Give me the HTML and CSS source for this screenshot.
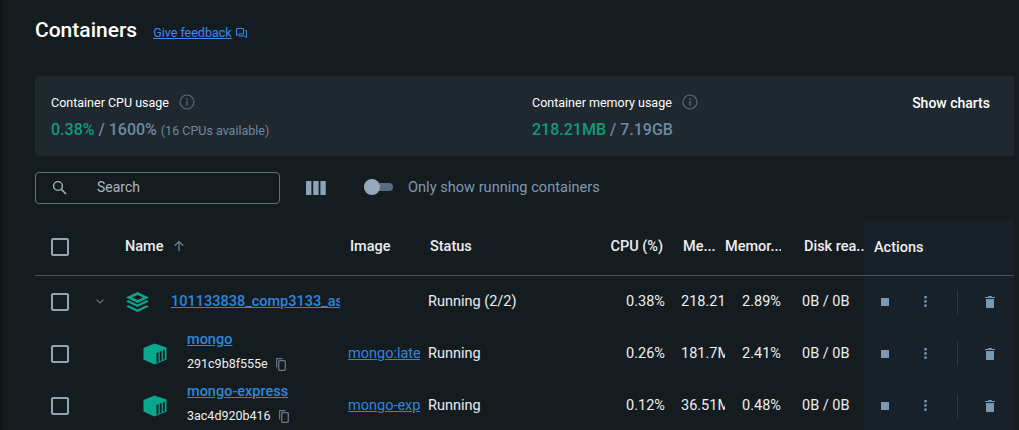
FILE: index.html
```html
<!DOCTYPE html>
<html lang="en">
<head>
    <meta charset="UTF-8">
    <title>Containers</title>
    <link rel="stylesheet" href="styles.css">
</head>
<body>
    <svg class="sprites" width="0" height="0">
        <symbol id="info" viewBox="0 0 16 16">
            <circle cx="8" cy="8" r="7" fill="none" stroke="currentColor" stroke-width="1.2"/>
            <rect x="7.3" y="7" width="1.4" height="4.5" fill="currentColor"/>
            <rect x="7.3" y="4.4" width="1.4" height="1.5" fill="currentColor"/>
        </symbol>
        <symbol id="stack" viewBox="0 0 25 22">
            <path d="M12.5 1 L24 6.5 L12.5 12 L1 6.5 Z M12.5 4 L7 6.5 L12.5 9 L18 6.5 Z" fill="currentColor" fill-rule="evenodd"/>
            <path d="M1 10.5 L3.5 9.3 L12.5 13.6 L21.5 9.3 L24 10.5 L12.5 16 Z" fill="currentColor"/>
            <path d="M1 15.5 L3.5 14.3 L12.5 18.6 L21.5 14.3 L24 15.5 L12.5 21 Z" fill="currentColor"/>
        </symbol>
        <symbol id="box" viewBox="0 0 24 22">
            <path d="M11.5 0.5 L23.5 4.5 V16.5 L11.5 21.5 L0.5 16.5 V5 Z" fill="currentColor"/>
            <path d="M13.5 10 L15.5 9.2 V19 L13.5 19.8 Z M16.8 8.6 L18.6 7.9 V17.6 L16.8 18.4 Z M19.9 7.4 L21.8 6.6 V16 L19.9 16.9 Z" fill="#151c20"/>
        </symbol>
        <symbol id="copy" viewBox="0 0 10 13">
            <path d="M0.6 9.5 V0.6 H6.5" fill="none" stroke="currentColor" stroke-width="1.1"/>
            <rect x="2.7" y="2.7" width="6.6" height="9.6" rx="1" fill="none" stroke="currentColor" stroke-width="1.3"/>
        </symbol>
        <symbol id="stop" viewBox="0 0 8 8">
            <rect width="8" height="8" fill="currentColor"/>
        </symbol>
        <symbol id="dots" viewBox="0 0 3 11">
            <rect width="2.4" height="2.4" x="0.3" fill="currentColor"/>
            <rect width="2.4" height="2.4" x="0.3" y="4.2" fill="currentColor"/>
            <rect width="2.4" height="2.4" x="0.3" y="8.4" fill="currentColor"/>
        </symbol>
        <symbol id="trash" viewBox="0 0 10 12">
            <path d="M0 1 H3 L3.5 0 H6.5 L7 1 H10 V2 H0 Z" fill="currentColor"/>
            <path d="M1 3 H9 V11 Q9 12 8 12 H2 Q1 12 1 11 Z" fill="currentColor"/>
        </symbol>
    </svg>

    <div class="page">
        <header class="title-row">
            <h1>Containers</h1>
            <a class="feedback" href="#">Give feedback</a>
            <svg class="feedback-icon" width="11" height="10" viewBox="0 0 11 10">
                <path d="M0.5 0.5 H7.5 V6 H2.5 L0.5 7.5 Z" fill="none" stroke="currentColor"/>
                <path d="M9 2.5 H10.5 V9.5 L8.5 8 H3 V7" fill="none" stroke="currentColor"/>
            </svg>
        </header>

        <section class="stats">
            <div class="stat stat-cpu">
                <div class="stat-label">Container CPU usage <svg class="info"><use href="#info"/></svg></div>
                <div class="stat-value"><span class="used">0.38%</span> / 1600% <small>(16 CPUs available)</small></div>
            </div>
            <div class="stat stat-mem">
                <div class="stat-label">Container memory usage <svg class="info"><use href="#info"/></svg></div>
                <div class="stat-value"><span class="used">218.21MB</span> / 7.19GB</div>
            </div>
            <button class="charts">Show charts</button>
        </section>

        <div class="toolbar">
            <label class="search">
                <svg width="15" height="15" viewBox="0 0 15 15">
                    <circle cx="6" cy="6" r="4.4" fill="none" stroke="currentColor" stroke-width="1.4"/>
                    <path d="M9.3 9.3 L14 14" stroke="currentColor" stroke-width="1.6"/>
                </svg>
                <span>Search</span>
            </label>
            <svg class="columns" width="20" height="14" viewBox="0 0 20 14">
                <rect width="5.4" height="14" rx="0.6" fill="currentColor"/>
                <rect x="7.2" width="5.4" height="14" rx="0.6" fill="currentColor"/>
                <rect x="14.4" width="5.4" height="14" rx="0.6" fill="currentColor"/>
            </svg>
            <span class="switch"><i></i></span>
            <span class="switch-label">Only show running containers</span>
        </div>

        <div class="table">
            <div class="row head">
                <div class="cell"><span class="check"></span></div>
                <div class="cell"></div>
                <div class="cell name-head">Name
                    <svg width="12" height="12" viewBox="0 0 12 12"><path d="M6 11 V1.5 M1.7 5.7 L6 1.4 L10.3 5.7" fill="none" stroke="currentColor" stroke-width="1.4"/></svg>
                </div>
                <div class="cell image-head">Image</div>
                <div class="cell status-head">Status</div>
                <div class="cell right cpu-head">CPU (%)</div>
                <div class="cell clip mem-head">Me...</div>
                <div class="cell clip pct-head">Memor...</div>
                <div class="cell clip disk-head">Disk rea...</div>
                <div class="cell actions">Actions</div>
            </div>

            <div class="row">
                <div class="cell"><span class="check"></span></div>
                <div class="cell chevron">
                    <svg width="8" height="5" viewBox="0 0 8 5"><path d="M0.6 0.6 L4 4 L7.4 0.6" fill="none" stroke="currentColor" stroke-width="1.2"/></svg>
                </div>
                <div class="cell group-name">
                    <svg class="stack-icon"><use href="#stack"/></svg>
                    <a class="bold-link" href="#">101133838_comp3133_assignment2</a>
                </div>
                <div class="cell"></div>
                <div class="cell">Running (2/2)</div>
                <div class="cell right">0.38%</div>
                <div class="cell clip">218.21MB</div>
                <div class="cell right pct">2.89%</div>
                <div class="cell disk">0B / 0B</div>
                <div class="cell actions row-actions">
                    <svg class="stop"><use href="#stop"/></svg>
                    <svg class="dots"><use href="#dots"/></svg>
                    <span class="divider"></span>
                    <svg class="trash"><use href="#trash"/></svg>
                </div>
            </div>

            <div class="row">
                <div class="cell"><span class="check"></span></div>
                <div class="cell"></div>
                <div class="cell child-name">
                    <svg class="box-icon"><use href="#box"/></svg>
                    <div class="child-text">
                        <a class="bold-link" href="#">mongo</a>
                        <div class="container-id">291c9b8f555e <svg class="copy"><use href="#copy"/></svg></div>
                    </div>
                </div>
                <div class="cell image"><a href="#">mongo:latest</a></div>
                <div class="cell">Running</div>
                <div class="cell right">0.26%</div>
                <div class="cell clip">181.7MB</div>
                <div class="cell right pct">2.41%</div>
                <div class="cell disk">0B / 0B</div>
                <div class="cell actions row-actions">
                    <svg class="stop"><use href="#stop"/></svg>
                    <svg class="dots"><use href="#dots"/></svg>
                    <span class="divider"></span>
                    <svg class="trash"><use href="#trash"/></svg>
                </div>
            </div>

            <div class="row">
                <div class="cell"><span class="check"></span></div>
                <div class="cell"></div>
                <div class="cell child-name">
                    <svg class="box-icon"><use href="#box"/></svg>
                    <div class="child-text">
                        <a class="bold-link" href="#">mongo-express</a>
                        <div class="container-id">3ac4d920b416 <svg class="copy"><use href="#copy"/></svg></div>
                    </div>
                </div>
                <div class="cell image"><a href="#">mongo-express</a></div>
                <div class="cell">Running</div>
                <div class="cell right">0.12%</div>
                <div class="cell clip">36.51MB</div>
                <div class="cell right pct">0.48%</div>
                <div class="cell disk">0B / 0B</div>
                <div class="cell actions row-actions">
                    <svg class="stop"><use href="#stop"/></svg>
                    <svg class="dots"><use href="#dots"/></svg>
                    <span class="divider"></span>
                    <svg class="trash"><use href="#trash"/></svg>
                </div>
            </div>
        </div>
    </div>
</body>
</html>
```

FILE: styles.css
```css
html, body {
    height: 100%;
    overflow: hidden;
}
body {
    margin: 0;
    background: #151c20;
    border-left: 3px solid #0f1417;
    font-family: Roboto, "Liberation Sans", sans-serif;
    font-size: 14.5px;
    color: #eceef0;
}
a {
    color: #2e86de;
}
.sprites {
    position: absolute;
}
.page {
    padding-left: 32px;
    padding-right: 5px;
}
.title-row {
    display: flex;
    align-items: center;
    height: 60px;
    margin-bottom: 16px;
}
h1 {
    margin: 0 16px 0 0;
    font-size: 21px;
    font-weight: 500;
    color: #fff;
}
.feedback {
    font-size: 12.5px;
    margin-top: 5px;
    color: #3a8df0;
}
.feedback-icon {
    margin: 5px 0 0 4px;
    color: #3a8df0;
}
.stats {
    display: flex;
    height: 80px;
    box-sizing: border-box;
    background: #1e282e;
    border-radius: 4px;
    padding: 17px 24px 0 16px;
}
.stat-cpu {
    width: 481px;
}
.stat-label {
    display: flex;
    align-items: center;
    gap: 10px;
    height: 18px;
    font-size: 12.5px;
    color: #fff;
}
.info {
    width: 16px;
    height: 16px;
    color: #5d6a75;
}
.stat-value {
    margin-top: 9px;
    font-size: 16px;
    font-weight: 500;
    color: #6d88a3;
}
.stat-value small {
    font-size: 12.5px;
    font-weight: 400;
}
.used {
    color: #0f9b7a;
}
.charts {
    margin: 1px 0 0 auto;
    padding: 0;
    height: 18px;
    background: none;
    border: none;
    font: 500 14px Roboto, sans-serif;
    color: #fff;
}
.toolbar {
    display: flex;
    align-items: center;
    height: 32px;
    margin: 16px 0;
}
.search {
    display: flex;
    align-items: center;
    box-sizing: border-box;
    width: 245px;
    height: 32px;
    padding: 0 0 2px 16px;
    border: 1px solid #5a7088;
    border-radius: 4px;
    color: #a9b6c3;
}
.search span {
    margin-left: 30px;
    font-size: 14px;
}
.columns {
    margin-left: 26px;
    color: #8ba3b8;
}
.switch {
    position: relative;
    width: 29px;
    height: 8px;
    margin: 0 0 2px 38px;
    border-radius: 4px;
    background: #566d85;
}
.switch i {
    position: absolute;
    left: 0;
    top: -4px;
    width: 16px;
    height: 16px;
    border-radius: 50%;
    background: #96a9bb;
}
.switch-label {
    margin: 0 0 2px 15px;
    font-size: 14.6px;
    color: #7e9ab5;
}
.row {
    display: grid;
    grid-template-columns: 55px 35px 223px 80px 172px 65px 60px 56px 83px 150px;
    height: 52px;
}
.head {
    height: 55px;
    border-bottom: 1px solid #4c5256;
    font-weight: 500;
}
.cell {
    display: flex;
    align-items: center;
    min-width: 0;
    white-space: nowrap;
    padding-bottom: 1px;
    box-sizing: border-box;
}
.head .cell {
    padding-bottom: 3px;
}
.head .actions {
    padding-bottom: 1px;
}
.right {
    justify-content: flex-end;
}
.clip {
    overflow: hidden;
    padding-left: 16px;
}
.image a {
    display: block;
    width: 72px;
    overflow: hidden;
}
.check {
    display: block;
    box-sizing: border-box;
    width: 18px;
    height: 18px;
    margin: 1px 0 0 16px;
    border: 2px solid #8fa5b8;
    border-radius: 2px;
}
.name-head svg {
    margin-left: 9px;
    color: #66788a;
}
.image-head {
    padding-left: 2px;
}
.status-head {
    padding-left: 2px;
}
.cpu-head {
    padding-right: 2px;
}
.mem-head {
    padding-left: 18px;
}
.pct-head {
    padding-left: 0;
}
.disk-head {
    padding-left: 23px;
}
.chevron {
    padding-left: 6px;
    color: #66788a;
}
.group-name {
    overflow: hidden;
    margin-right: 8px;
}
.stack-icon {
    flex: none;
    width: 25px;
    height: 22px;
    margin-right: 21px;
    color: #10a58b;
}
.bold-link {
    font-weight: 500;
}
.child-name {
    padding-left: 18px;
}
.box-icon {
    flex: none;
    width: 24px;
    height: 22px;
    margin-right: 20px;
    color: #0aa78f;
}
.child-text {
    line-height: 16px;
    margin-top: -3px;
}
.container-id {
    display: flex;
    align-items: center;
    gap: 8px;
    margin-top: 8px;
    font-size: 12.5px;
}
.copy {
    width: 10px;
    height: 13px;
    color: #66788a;
}
.disk {
    padding-left: 21px;
}
.actions {
    padding-left: 10px;
    background: #18212a;
}
.row-actions {
    padding-left: 17px;
    color: #7c99b4;
}
.stop {
    width: 8px;
    height: 8px;
}
.dots {
    width: 3px;
    height: 11px;
    margin-left: 35px;
}
.divider {
    width: 1px;
    height: 24px;
    margin-left: 30px;
    background: #2d3a44;
}
.trash {
    width: 10px;
    height: 12px;
    margin-left: 27px;
}
```
